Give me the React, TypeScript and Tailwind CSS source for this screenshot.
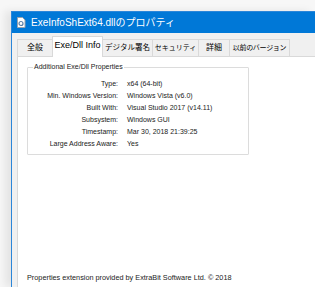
const font = { fontFamily: '"Liberation Sans", "Noto Sans CJK JP", sans-serif' }

const rows: [string, string][] = [
  ['Type:', 'x64 (64-bit)'],
  ['Min. Windows Version:', 'Windows Vista (v6.0)'],
  ['Built With:', 'Visual Studio 2017 (v14.11)'],
  ['Subsystem:', 'Windows GUI'],
  ['Timestamp:', 'Mar 30, 2018 21:39:25'],
  ['Large Address Aware:', 'Yes'],
]

const tabs: { label: string; cls: string }[] = [
  { label: '全般', cls: 'w-[35px] text-[8px]' },
  { label: 'Exe/Dll Info', cls: 'w-[51px] text-[9px]' },
  { label: 'デジタル署名', cls: 'w-[50px] text-[7.5px]' },
  { label: 'セキュリティ', cls: 'w-[46px] text-[7px]' },
  { label: '詳細', cls: 'w-[31px] text-[8px]' },
  { label: '以前のバージョン', cls: 'w-[60px] text-[7px] tracking-[-0.3px]' },
]

function FileIcon() {
  return (
    <svg width="10" height="11" viewBox="0 0 10 11">
      <path d="M1.5 0.5h5l2.5 2.5v7.5h-7.5z" fill="#fff" stroke="#9aa3ad" />
      <circle cx="5" cy="6.5" r="2" fill="none" stroke="#5b7fa6" strokeWidth="1.2" />
    </svg>
  )
}

export default function App() {
  return (
    <div className="w-[315px] h-[287px] overflow-hidden bg-[#f7f7f7] pl-[11px] pt-[11px]" style={font}>
      <div className="h-full bg-[#f0f0f0] border-l border-t border-[#2b86d9] flex flex-col shadow-[-6px_0_8px_rgba(0,0,0,0.08)]">
        <div className="h-[21px] bg-[#0078d7] flex items-center pl-[4px] gap-[5px] shrink-0">
          <FileIcon />
          <span className="text-white text-[10px] leading-none">ExeInfoShExt64.dllのプロパティ</span>
        </div>
        <div className="flex-1 flex flex-col pl-[5px] pt-[3px]">
          <div className="flex items-end h-[20px]">
            {tabs.map((t, i) =>
              i === 1 ? (
                <div
                  key={t.label}
                  className={`${t.cls} shrink-0 whitespace-nowrap h-[21px] bg-white border border-b-0 border-[#d9d9d9] text-black flex items-center justify-center -mb-px relative z-10 pb-[2px]`}
                >
                  {t.label}
                </div>
              ) : (
                <div
                  key={t.label}
                  className={`${t.cls} shrink-0 whitespace-nowrap h-[17px] border border-b-0 border-[#d9d9d9] ${i > 1 ? 'border-l-0' : 'border-r-0'} text-black flex items-center justify-center`}
                >
                  {t.label}
                </div>
              )
            )}
          </div>
          <div className="flex-1 bg-white border-l border-t border-[#d9d9d9] pl-[9px] pt-[10px] flex flex-col">
            <div className="w-[222px] border border-[#dcdcdc] rounded-[1px] relative pt-[9px] pb-[5px]">
              <span className="absolute -top-[5px] left-[5px] bg-white px-[1px] text-[7px] leading-none text-[#222]">
                Additional Exe/Dll Properties
              </span>
              {rows.map(([k, v]) => (
                <div key={k} className="flex h-[12px] items-center text-[7px] text-[#222] leading-none">
                  <span className="w-[90px] text-right">{k}</span>
                  <span className="ml-[9px]">{v}</span>
                </div>
              ))}
            </div>
            <div className="mt-auto mb-[6px] text-[7.3px] leading-none text-[#222]">
              Properties extension provided by ExtraBit Software Ltd. © 2018
            </div>
          </div>
        </div>
      </div>
    </div>
  )
}
